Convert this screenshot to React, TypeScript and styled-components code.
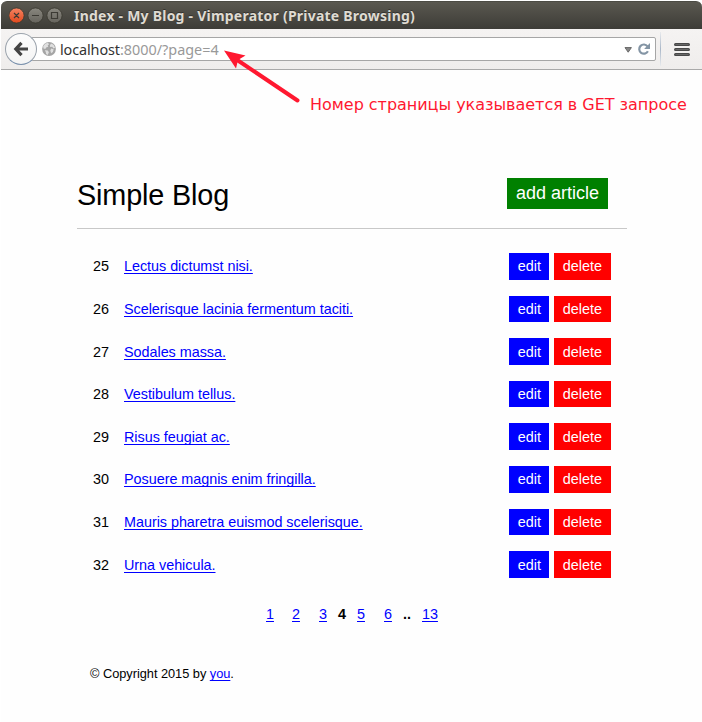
import React from "react";
import styled, { createGlobalStyle } from "styled-components";

const GlobalStyle = createGlobalStyle`
  * { box-sizing: border-box; }
  body { margin: 0; background: #fff; }
`;

const Window = styled.div`
  position: relative;
  width: 702px;
  height: 722px;
  padding: 1px 0 0 1px;
  overflow: hidden;
  background: #fff;
  font-family: "Liberation Sans", Arial, sans-serif;
`;

const TitleBar = styled.header`
  display: flex;
  align-items: center;
  height: 28px;
  padding-left: 8px;
  border-radius: 6px 6px 0 0;
  background: linear-gradient(#5a5850, #3d3c37);
  border-top: 1px solid #4c4b44;
`;

const WindowControls = styled.svg`
  display: block;
  flex: none;
`;

const WindowTitle = styled.span`
  margin-left: 11px;
  font: bold 14px/20px "Noto Sans", sans-serif;
  letter-spacing: 0.23px;
  white-space: nowrap;
  color: #dfdbd2;
  text-shadow: 0 -1px 0 #33322e;
`;

const NavBar = styled.nav`
  display: flex;
  align-items: center;
  height: 41px;
  padding-left: 4px;
  background: linear-gradient(#f5f3f2, #efedec);
  border-bottom: 1px solid #a9a9a9;
`;

const BackButton = styled.button`
  z-index: 1;
  display: flex;
  align-items: center;
  justify-content: center;
  flex: none;
  width: 32px;
  height: 32px;
  padding: 0;
  border: 1px solid #9ba3ac;
  border-bottom-color: #7990ac;
  border-radius: 50%;
  background: linear-gradient(#fcfcfc, #f4f4f4);
`;

const AddressBar = styled.div`
  display: flex;
  align-items: center;
  width: 625px;
  height: 24px;
  margin-left: -6px;
  padding: 0 4px 0 10px;
  border: 1px solid #a6a6a6;
  border-radius: 2px;
  background: #fff;
`;

const Address = styled.span`
  flex: 1;
  margin: 1px 0 0 4px;
  font: 14.4px/20px "Noto Sans", sans-serif;
  color: #999;
`;

const Host = styled.span`
  color: #333;
  letter-spacing: -0.1px;
`;

const Separator = styled.div`
  width: 1px;
  height: 34px;
  margin: 0 13px 0 4px;
  background: linear-gradient(#e8eaed, #aab7c8 50%, #e8eaed);
`;

const Page = styled.main`
  height: 652px;
  padding: 108px 75px 0 76px;
  background: #fefefe;
  color: #000;
`;

const PageHeader = styled.div`
  display: flex;
  justify-content: space-between;
  align-items: flex-start;
  height: 51px;
  padding-right: 19px;
  border-bottom: 1px solid #c8c8c8;
`;

const Heading = styled.h1`
  margin: 0;
  font-size: 28.8px;
  font-weight: 400;
  line-height: 34px;
  letter-spacing: -0.15px;
`;

const Action = styled.button<{ $color: string; $large?: boolean }>`
  height: ${(p) => (p.$large ? 31 : 26.6)}px;
  padding: 0 9px;
  border: 0;
  background: ${(p) => p.$color};
  color: #fff;
  font: ${(p) => (p.$large ? "18px" : "14.4px")} "Liberation Sans", Arial, sans-serif;
  white-space: nowrap;
`;

const EditAction = styled(Action)`
  width: 40px;
  padding: 0 0 0 1px;
`;

const Articles = styled.ul`
  margin: 24px 16px 0;
  padding: 0;
  list-style: none;
`;

const Article = styled.li`
  display: flex;
  align-items: center;
  height: 26.6px;
  margin-bottom: 16.02px;
  font-size: 14.4px;
`;

const Num = styled.span`
  width: 31px;
`;

const Link = styled.a`
  color: #0000ff;
  letter-spacing: -0.035px;
  text-decoration: underline;
  text-decoration-thickness: 1px;
  text-underline-offset: 2px;
  text-decoration-skip-ink: none;
`;

const Actions = styled.div`
  display: flex;
  gap: 5px;
  margin-left: auto;
`;

const Pagination = styled.nav`
  display: grid;
  grid-template-columns: 26px 27px 19px 19px 27px 19px 19px 18px;
  margin: 27.2px 0 0 189px;
  font-size: 14.4px;
  line-height: 18px;
`;

const Footer = styled.footer`
  margin: 43px 0 0 13px;
  font-size: 12.8px;
  line-height: 16px;
  letter-spacing: -0.03px;
`;

const Annotation = styled.div`
  position: absolute;
  left: 310px;
  top: 95px;
  font: 16px/20px "DejaVu Sans", sans-serif;
  letter-spacing: -0.025px;
  white-space: nowrap;
  color: #ff1830;
`;

const Arrow = styled.svg`
  position: absolute;
  left: 220px;
  top: 46px;
  z-index: 2;
`;

const articles = [
  { id: 25, title: "Lectus dictumst nisi." },
  { id: 26, title: "Scelerisque lacinia fermentum taciti." },
  { id: 27, title: "Sodales massa." },
  { id: 28, title: "Vestibulum tellus." },
  { id: 29, title: "Risus feugiat ac." },
  { id: 30, title: "Posuere magnis enim fringilla." },
  { id: 31, title: "Mauris pharetra euismod scelerisque." },
  { id: 32, title: "Urna vehicula." },
];

const pages = ["1", "2", "3", "4", "5", "6", "..", "13"];

export default function App() {
  return (
    <Window>
      <GlobalStyle />
      <TitleBar>
        <WindowControls width="54" height="18" viewBox="0 0 54 18">
          <defs>
            <linearGradient id="close" x2="0" y2="1">
              <stop stopColor="#f58463" />
              <stop offset="1" stopColor="#e0481c" />
            </linearGradient>
            <linearGradient id="plain" x2="0" y2="1">
              <stop stopColor="#89877f" />
              <stop offset="1" stopColor="#66645d" />
            </linearGradient>
          </defs>
          <circle cx="7.5" cy="8.5" r="7.6" fill="url(#close)" stroke="#38372f" strokeWidth=".8" />
          <circle cx="26.5" cy="8.5" r="7.6" fill="url(#plain)" stroke="#38372f" strokeWidth=".8" />
          <circle cx="45.5" cy="8.5" r="7.6" fill="url(#plain)" stroke="#38372f" strokeWidth=".8" />
          <path d="m5 6 5 5m0-5-5 5M23 8.5h7M42.5 5.5h6v6h-6z" fill="none" stroke="#3c3a34" strokeWidth="1.2" />
        </WindowControls>
        <WindowTitle>Index - My Blog - Vimperator (Private Browsing)</WindowTitle>
      </TitleBar>
      <NavBar>
        <BackButton aria-label="Back">
          <svg width="16" height="16" viewBox="0 0 16 16">
            <path d="M8.5 1.8 2.8 8l5.7 6.2M3 8h12" fill="none" stroke="#444" strokeWidth="3.2" />
          </svg>
        </BackButton>
        <AddressBar>
          <svg width="14" height="14" viewBox="0 0 14 14">
            <circle cx="7" cy="7" r="6.9" fill="#a5a5a5" />
            <path d="m1.2 4.2 2-2.5 2.6-.9 1.4 1.4-1.5 1.1.5 1.4-2 .7-.9 1.5-1.8-.5zM9 1.5l2.5 1.2 1.6 3-1.7.7-1.2-1.6-2 .3-.3-1.7zM2.8 8.3l2.9.3 1.2 1.7-1.2 2.8-1.6-1.1-.3-2.1zM9.2 6.5l2.5.8-.8 2.6-1.8 1.3-.8-2.7z" fill="#e0e0e0" />
          </svg>
          <Address><Host>localhost</Host>:8000/?page=4</Address>
          <svg width="28" height="14" viewBox="0 0 28 14">
            <path d="M2 5.6h6.4L5.2 10.2z" fill="#888" stroke="#666" />
            <path d="M24.9 9.3a4.6 4.6 0 1 1-.4-5" fill="none" stroke="#8495a5" strokeWidth="2.2" />
            <path d="M27 1v5.9h-5.9z" fill="#8495a5" />
          </svg>
        </AddressBar>
        <Separator />
        <svg width="16" height="13" viewBox="0 0 16 13">
          <path d="M1.5 1.5h13m-13 5h13m-13 5h13" stroke="#484848" strokeWidth="3" strokeLinecap="round" />
          <path d="M1.5 1.5h13m-13 5h13m-13 5h13" stroke="#666" strokeWidth="1" />
        </svg>
      </NavBar>
      <Page>
        <PageHeader>
          <Heading>Simple Blog</Heading>
          <Action $color="#008000" $large>add article</Action>
        </PageHeader>
        <Articles>
          {articles.map(({ id, title }) => (
            <Article key={id}>
              <Num>{id}</Num>
              <Link>{title}</Link>
              <Actions>
                <EditAction $color="#0000ff">edit</EditAction>
                <Action $color="#ff0000">delete</Action>
              </Actions>
            </Article>
          ))}
        </Articles>
        <Pagination>
          {pages.map((page) =>
            page === "4" || page === ".." ? (
              <b key={page}>{page}</b>
            ) : (
              <span key={page}><Link>{page}</Link></span>
            )
          )}
        </Pagination>
        <Footer>© Copyright 2015 by <Link>you</Link>.</Footer>
      </Page>
      <Arrow width="82" height="58" viewBox="0 0 82 58">
        <path d="M15 12.5 77.5 54.5" stroke="#ff1830" strokeWidth="4" strokeLinecap="round" />
        <path d="M4 4.5 25.5 9.5 18 14 16 22.5z" fill="#ff1830" />
      </Arrow>
      <Annotation>Номер страницы указывается в GET запросе</Annotation>
    </Window>
  );
}
